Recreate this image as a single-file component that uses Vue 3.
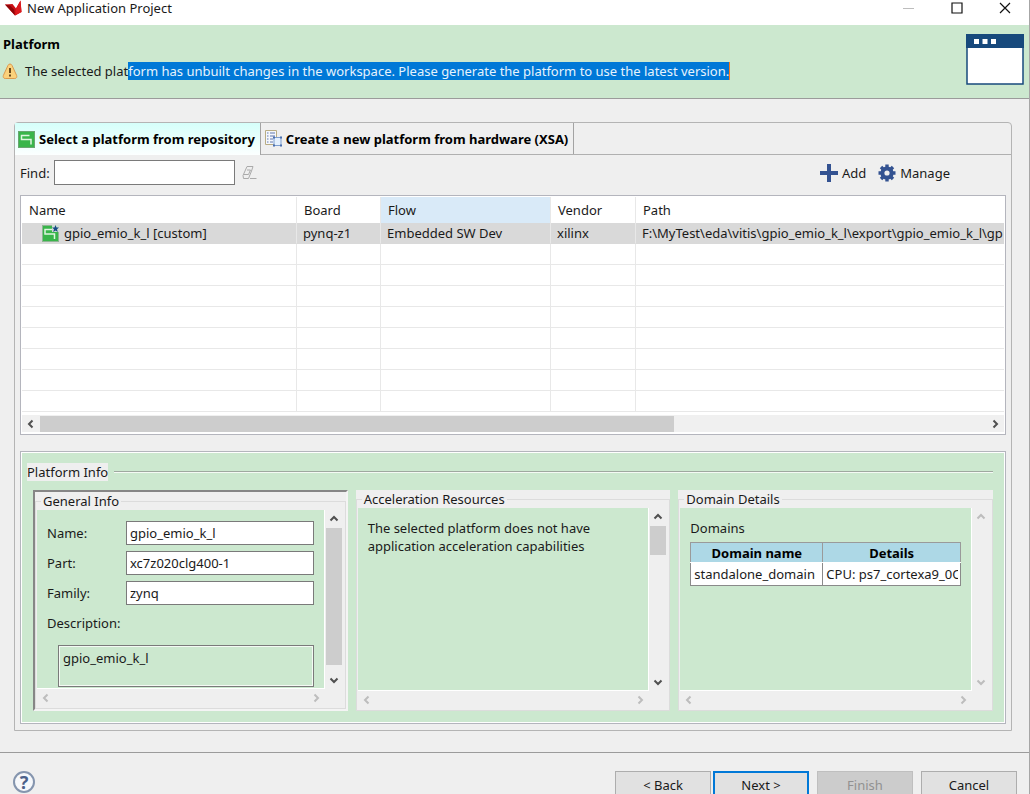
<script setup>
import { h, ref } from 'vue'

const chevrons = {
  left: 'M6.5 1.5 3 5l3.5 3.5',
  right: 'M3.5 1.5 7 5 3.5 8.5',
  up: 'M1.5 6.5 5 3l3.5 3.5',
  down: 'M1.5 3.5 5 7l3.5-3.5',
}
const Chevron = (props) =>
  h('svg', { width: 10, height: 10, viewBox: '0 0 10 10', 'aria-hidden': 'true' }, [
    h('path', { d: chevrons[props.dir], fill: 'none', stroke: 'currentColor', 'stroke-width': 2 }),
  ])
Chevron.props = ['dir']

const find = ref('')
const platforms = [
  {
    name: 'gpio_emio_k_l [custom]',
    board: 'pynq-z1',
    flow: 'Embedded SW Dev',
    vendor: 'xilinx',
    path: 'F:\\MyTest\\eda\\vitis\\gpio_emio_k_l\\export\\gpio_emio_k_l\\gp',
  },
]
const emptyRows = 8
const general = ref([
  { id: 'name', label: 'Name:', value: 'gpio_emio_k_l' },
  { id: 'part', label: 'Part:', value: 'xc7z020clg400-1' },
  { id: 'family', label: 'Family:', value: 'zynq' },
])
const description = ref('gpio_emio_k_l')
</script>

<template>
  <div class="window">
    <header class="titlebar">
      <svg class="logo" width="18" height="16" viewBox="0 0 18 16" aria-hidden="true">
        <path d="M0 4.500 7.500 4l3.500 4.500L15.500.500 16.500 12 10 15.500z" fill="#c90f14" />
        <path d="M0 4.500l5 1 4 4 1 6z" fill="#8e0609" />
        <path d="M11 8.500 15.500.500l1 11.500-6.500 3.500z" fill="#dc1a1e" />
      </svg>
      <span class="caption">New Application Project</span>
      <button class="win" aria-label="Minimize" disabled>
        <svg width="12" height="12" viewBox="0 0 12 12"><path d="M0 6.500h11" stroke="#bdbdbd" /></svg>
      </button>
      <button class="win" aria-label="Maximize">
        <svg width="12" height="12" viewBox="0 0 12 12"><path d="M1 1h10v10H1z" fill="none" stroke="#111" stroke-width="1.200" /></svg>
      </button>
      <button class="win" aria-label="Close">
        <svg width="12" height="12" viewBox="0 0 12 12"><path d="M1 1l10 10M11 1 1 11" stroke="#111" stroke-width="1.200" /></svg>
      </button>
    </header>

    <section class="banner">
      <div class="banner-text">
        <h1>Platform</h1>
        <p class="message">
          <svg width="16" height="17" viewBox="0 0 16 17" aria-hidden="true">
            <path d="M8 1c1 0 1.600.6 2 1.400l4.600 10c.6 1.600-.1 3.100-1.800 3.100H3.200c-1.700 0-2.400-1.500-1.800-3.100L6 2.400C6.400 1.600 7 1 8 1z" fill="#fbd27c" stroke="#dd9a4e" />
            <path d="M8 5v5" stroke="#6b4a1c" stroke-width="2" />
            <path d="M8 11.500v2" stroke="#6b4a1c" stroke-width="2" />
          </svg>
          <span>The selected plat<mark>form has unbuilt changes in the workspace. Please generate the platform to use the latest version.</mark></span>
        </p>
      </div>
      <svg class="banner-icon" width="58" height="51" viewBox="0 0 58 51" aria-hidden="true">
        <rect x="1" y="1" width="56" height="49" fill="#fff" stroke="#17497c" stroke-width="1.500" />
        <rect x="0" y="0" width="58" height="14" fill="#17497c" />
        <path d="M8 5h5v5H8zM16.500 5h5v5h-5zM25 5h5v5h-5z" fill="#fff" />
      </svg>
    </section>

    <main class="folder">
      <div class="tabs" role="tablist">
        <button class="tab active" role="tab" aria-selected="true">
          <svg width="17" height="17" viewBox="0 0 17 17" aria-hidden="true">
            <rect x="0.500" y="0.500" width="16" height="16" fill="#39b54a" stroke="#6aa570" />
            <path d="M11.500 4.500H3.500v4h9.500v5" fill="none" stroke="#dff5e0" stroke-width="1.500" />
          </svg>
          Select a platform from repository
        </button>
        <button class="tab" role="tab" aria-selected="false">
          <svg width="17" height="17" viewBox="0 0 17 17" aria-hidden="true">
            <path d="M.5.500h11v14H.5z" fill="#f5f7fc" stroke="#b9ad84" />
            <path d="M2 3h1.500M2 6h1.500M2 9h1.500M2 12h1.500M5 3h5M5 6h5M5 9h3M5 12h3" stroke="#6079ad" />
            <path d="M9 7.500h7v8H9z" fill="#e4f0fd" stroke="#7f9fd0" />
            <path d="M8 6.500h2v2H8zM15 6.500h2v2h-2zM8 14.500h2v2H8zM15 14.500h2v2h-2z" fill="#4a6fae" />
          </svg>
          Create a new platform from hardware (XSA)
        </button>
      </div>

      <div class="toolbar">
        <label for="find">Find:</label>
        <input id="find" v-model="find" class="find" type="text" />
        <button class="tool clear" aria-label="Clear">
          <svg width="15" height="14" viewBox="0 0 15 14"><path d="M5 .500h6L9.500 5l-3 7.500H1.500L1 9.500zM2 8.500h4.500L8.500 4H5M8 12.500h6.500" fill="none" stroke="#aaa" /></svg>
        </button>
        <div class="actions">
          <button class="tool">
            <svg width="18" height="18" viewBox="0 0 18 18" aria-hidden="true"><path d="M7 0h4v7h7v4h-7v7H7v-7H0V7h7z" fill="#335291" /></svg>
            Add
          </button>
          <button class="tool">
            <svg width="18" height="18" viewBox="0 0 18 18" aria-hidden="true">
              <circle cx="9" cy="9" r="4.600" fill="none" stroke="#335291" stroke-width="4" />
              <path d="M9 .5v4M9 13.500v4M.5 9h4M13.500 9h4M3 3l2.500 2.500M12.500 12.500 15 15M15 3l-2.500 2.500M5.500 12.500 3 15" stroke="#335291" stroke-width="3.400" />
            </svg>
            Manage
          </button>
        </div>
      </div>

      <div class="list">
        <table class="grid">
          <colgroup>
            <col class="c-name" /><col class="c-board" /><col class="c-flow" /><col class="c-vendor" /><col />
          </colgroup>
          <thead>
            <tr><th>Name</th><th>Board</th><th class="sorted">Flow</th><th>Vendor</th><th>Path</th></tr>
          </thead>
          <tbody>
            <tr v-for="p in platforms" :key="p.path" class="selected">
              <td>
                <span class="node">
                  <svg width="17" height="17" viewBox="0 0 17 17" aria-hidden="true">
                    <rect x="0.500" y="0.500" width="16" height="16" fill="#39b54a" stroke="#8fb593" />
                    <path d="M10 4.500H3v4.500h9.500v5" fill="none" stroke="#dff5e0" stroke-width="1.500" />
                    <path d="M10 0h7v7h-7z" fill="#d0dcd2" />
                    <path d="M13.500 0l1 2.500H17L15 4.200l.8 2.800-2.300-1.600L11.200 7l.8-2.800-2-1.700h2.500z" fill="#174a86" />
                  </svg>
                  {{ p.name }}
                </span>
              </td>
              <td>{{ p.board }}</td><td>{{ p.flow }}</td><td>{{ p.vendor }}</td><td>{{ p.path }}</td>
            </tr>
            <tr v-for="n in emptyRows" :key="n"><td></td><td></td><td></td><td></td><td></td></tr>
          </tbody>
        </table>
        <div class="hbar">
          <Chevron dir="left" />
          <div class="track"><div class="thumb"></div></div>
          <Chevron dir="right" />
        </div>
      </div>

      <section class="info">
        <div class="info-head"><h2>Platform Info</h2><span class="rule"></span></div>
        <div class="groups">
          <div class="group sunken">
            <fieldset>
              <legend>General Info</legend>
              <div class="scroller">
                <div class="view form">
                  <template v-for="f in general" :key="f.id">
                    <label :for="f.id">{{ f.label }}</label>
                    <input :id="f.id" v-model="f.value" type="text" readonly />
                  </template>
                  <label for="description" class="wide">Description:</label>
                  <textarea id="description" v-model="description" readonly></textarea>
                </div>
                <div class="vbar">
                  <Chevron dir="up" />
                  <div class="track"><div class="thumb long"></div></div>
                  <Chevron dir="down" />
                </div>
                <div class="hbar off"><Chevron dir="left" /><div class="track"></div><Chevron dir="right" /></div>
              </div>
            </fieldset>
          </div>

          <div class="group">
            <fieldset>
              <legend>Acceleration Resources</legend>
              <div class="scroller">
                <div class="view">
                  <p>The selected platform does not have application acceleration capabilities</p>
                </div>
                <div class="vbar">
                  <Chevron dir="up" />
                  <div class="track"><div class="thumb short"></div></div>
                  <Chevron dir="down" />
                </div>
                <div class="hbar off"><Chevron dir="left" /><div class="track"></div><Chevron dir="right" /></div>
              </div>
            </fieldset>
          </div>

          <div class="group">
            <fieldset>
              <legend>Domain Details</legend>
              <div class="scroller">
                <div class="view">
                  <table class="domains">
                    <caption>Domains</caption>
                    <thead><tr><th class="d-name">Domain name</th><th>Details</th></tr></thead>
                    <tbody><tr><td>standalone_domain</td><td><div class="clip">CPU: ps7_cortexa9_0O</div></td></tr></tbody>
                  </table>
                </div>
                <div class="vbar off"><Chevron dir="up" /><div class="track"></div><Chevron dir="down" /></div>
                <div class="hbar off"><Chevron dir="left" /><div class="track"></div><Chevron dir="right" /></div>
              </div>
            </fieldset>
          </div>
        </div>
      </section>
    </main>

    <footer class="footer">
      <button class="help" aria-label="Help">?</button>
      <div class="pair">
        <button class="btn">&lt; Back</button>
        <button class="btn primary">Next &gt;</button>
      </div>
      <button class="btn" disabled>Finish</button>
      <button class="btn">Cancel</button>
    </footer>
  </div>
</template>

<style>
html {
  scrollbar-width: none;
  background: #efefef;
}
</style>

<style scoped>
.window {
  box-sizing: border-box;
  min-height: 100vh;
  border-right: 1px solid #a6a6a6;
  background: #efefef;
  color: #1a1a1a;
  font: 13px/18px "Noto Sans", "Open Sans", sans-serif;
}
h1, h2, p, fieldset, legend { margin: 0; padding: 0; }
svg { flex: none; display: block; }
button, input, textarea { font: inherit; color: inherit; box-sizing: border-box; }

.titlebar {
  display: flex;
  align-items: center;
  height: 25px;
  box-sizing: border-box;
  padding: 0 18px 9px 5px;
  background: #fff;
}
.caption { flex: 1; padding-left: 4px; }
.win { display: flex; padding: 0; border: 0; background: none; margin-left: 36px; }

.banner {
  display: flex;
  justify-content: space-between;
  align-items: flex-start;
  padding: 9px 5px 13px 3px;
  border-bottom: 1px solid #9b9b9b;
  background: #cce8cf;
}
h1 { font-size: 13px; line-height: 20px; color: #000; }
.message { display: flex; align-items: center; gap: 7px; margin-top: 8px; margin-left: -1px; }
mark { background: #0078d7; color: #e6f3fc; border-right: 1px solid #ff7a1a; }

.folder {
  margin: 23px 17px 0 14px;
  padding-bottom: 6px;
  border: 1px solid #b4b4b4;
  border-radius: 4px 4px 0 0;
}
.tabs { display: flex; height: 32px; box-sizing: border-box; border-bottom: 1px solid #b0b0b0; }
.tab {
  display: flex;
  align-items: center;
  gap: 4px;
  height: 31px;
  padding: 0 5px 0 4px;
  border: 0;
  border-right: 1px solid #a3a3a3;
  background: none;
  color: #000;
  font-weight: 700;
  white-space: nowrap;
}
.tab.active {
  height: 32px;
  padding-left: 3px;
  background: linear-gradient(#d5fffa, #fcffff);
}

.toolbar { display: flex; align-items: center; padding: 5px 61px 10px 5px; }
.find { width: 181px; height: 25px; margin: 0 7px 0 4px; border: 1px solid #7a7a7a; background: #fff; padding: 0 4px; }
.tool { display: flex; align-items: center; gap: 4px; padding: 0; border: 0; background: none; }
.actions { display: flex; gap: 12px; margin-left: auto; }

.list { margin: 0 5px; border: 1px solid #b4b5bd; background: #fff; overflow: hidden; padding: 1px; }
.grid { width: 100%; table-layout: fixed; border-collapse: separate; border-spacing: 0; }
.c-name { width: 275px; }
.c-board { width: 84px; }
.c-flow { width: 170px; }
.c-vendor { width: 85px; }
.grid th {
  height: 26px;
  padding: 0 0 0 7px;
  border-right: 1px solid #e8e8e8;
  text-align: left;
  font-weight: 400;
}
.grid .sorted { background: #d9eaf8; }
.grid td {
  height: 20px;
  padding: 0 0 0 6px;
  border-right: 1px solid #e8e8e8;
  border-bottom: 1px solid #e8e8e8;
  white-space: nowrap;
  overflow: hidden;
}
.grid th:last-child, .grid td:last-child { border-right: 0; }
.grid .selected td { background: #d9d9d9; border-bottom-color: #d9d9d9; }
.node { display: flex; align-items: center; gap: 5px; padding-left: 14px; }

.hbar {
  display: flex;
  align-items: center;
  height: 17px;
  background: #f0f0f0;
  color: #505050;
}
.hbar svg { margin: 0 4px; }
.hbar .track { flex: 1; height: 16px; }
.hbar .thumb { width: 67%; height: 100%; background: #cdcdcd; }
.list .hbar { margin-top: 3px; margin-bottom: 1px; }
.vbar {
  display: flex;
  flex-direction: column;
  align-items: center;
  color: #505050;
}
.vbar svg { margin: 4px 0; }
.vbar .track { flex: 1; width: 16px; }
.vbar .long { height: 96%; background: #cdcdcd; }
.vbar .short { height: 29px; background: #cdcdcd; }
.off { color: #bdbdbd; }

.info {
  margin: 16px 5px 0;
  padding: 11px 12px 12px;
  border: 1px solid #b4b5bd;
  outline: 1px solid #fff;
  outline-offset: -2px;
  background: #cce8cf;
}
.info-head { display: flex; align-items: center; gap: 6px; margin-left: -6px; }
h2 { font-size: 13px; font-weight: 400; line-height: 18px; background: #efefef; }
.rule { flex: 1; height: 1px; background: #9fa8a0; border-bottom: 1px solid #f4faf4; }
.groups { display: grid; grid-template-columns: repeat(3, minmax(0, 1fr)); gap: 8px; margin-top: 9px; }
.group { display: flex; box-sizing: border-box; height: 221px; background: #efefef; }
.group.sunken { border: 2px solid; border-color: #868686 #f4f4f4 #f4f4f4 #868686; }
fieldset { flex: 1; display: flex; flex-direction: column; min-width: 0; border: 1px solid #dcdcdc; }
legend { margin-left: 5px; padding: 0 2px; }
.scroller {
  flex: 1;
  display: grid;
  grid-template-columns: minmax(0, 1fr) 18px;
  grid-template-rows: minmax(0, 1fr) 18px;
  margin: 0 2px 1px 1px;
}
.view {
  padding: 11px 10px 0;
  background: #cce8cf;
  border: 0 solid #fff;
  border-width: 0 1px 1px 0;
  overflow: hidden;
}
.scroller .hbar { background: none; }
.form { display: grid; grid-template-columns: 79px minmax(0, 1fr); grid-auto-rows: 24px; row-gap: 6px; align-items: center; align-content: start; }
.form input { width: 100%; height: 24px; padding: 0 3px; border: 1px solid #7a7a7a; background: #fff; }
.form .wide { grid-column: 1 / -1; }
.form textarea {
  grid-column: 1 / -1;
  align-self: start;
  height: 42px;
  margin: 4px 0 0 11px;
  padding: 3px 4px;
  border: 1px solid #7a7a7a;
  outline: 1px solid #f4faf4;
  outline-offset: -2px;
  background: #cce8cf;
  resize: none;
  overflow: hidden;
}
.domains { width: 100%; table-layout: fixed; border-collapse: collapse; }
.domains caption { text-align: left; padding-bottom: 5px; }
.domains th { height: 19px; padding: 0; background: #add8e6; border: 1px solid #9a9a9a; border-bottom-color: #fff; color: #000; }
.domains .d-name { width: 131px; }
.domains th + th { border-left-color: #fff; }
.domains td { height: 22px; padding: 0 2px 0 3px; background: #fff; border: 1px solid #8a8a8a; white-space: nowrap; }
.clip { overflow: hidden; }

.footer {
  display: flex;
  align-items: flex-start;
  gap: 8px;
  margin-top: 21px;
  padding: 18px 12px 12px 13px;
  border-top: 1px solid #9b9b9b;
}
.help {
  width: 22px;
  height: 22px;
  margin-right: auto;
  padding: 0;
  border: 2px solid #8595ae;
  border-radius: 50%;
  background: #f6f8fb;
  color: #4b618a;
  font-size: 18px;
  font-weight: 700;
  line-height: 18px;
}
.pair { display: flex; gap: 2px; }
.btn { width: 96px; height: 28px; padding: 0; border: 1px solid #adadad; background: #e1e1e1; }
.btn.primary { border: 2px solid #0078d7; }
.btn:disabled { background: #cccccc; border-color: #bfbfbf; color: #919191; }
</style>
